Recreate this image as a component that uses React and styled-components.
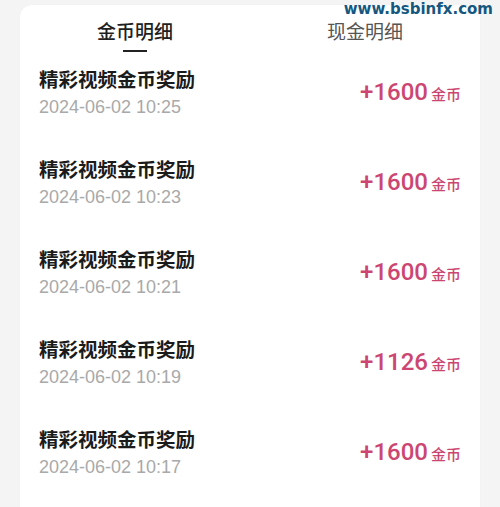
import React from "react";
import styled, { createGlobalStyle } from "styled-components";

const Global = createGlobalStyle`
  html, body { margin: 0; padding: 0; background: #f4f4f4; }
  body { font-family: "Liberation Sans", "Noto Sans CJK SC", sans-serif; }
  * { box-sizing: border-box; }
`;

const Page = styled.div`
  position: relative;
  width: 500px;
  height: 507px;
  overflow: hidden;
  background: #f4f4f4;
  padding: 5px 20px 0 20px;
`;

const Card = styled.div`
  background: #ffffff;
  border-radius: 12px 12px 0 0;
  height: 520px;
  padding: 0 19px;
  box-shadow: 0 0 2px rgba(0, 0, 0, 0.03);
`;

const Tabs = styled.div`
  display: grid;
  grid-template-columns: 1fr 1fr;
  margin: 0 -19px;
  height: 48px;
  padding-top: 14px;
`;

const Tab = styled.div`
  display: flex;
  flex-direction: column;
  align-items: center;
  font-family: "Noto Sans CJK SC", sans-serif;
  font-size: 19px;
  line-height: 24px;
  color: ${(p) => (p.$active ? "#1f1f1f" : "#555555")};
  font-weight: ${(p) => (p.$active ? 500 : 400)};
`;

const Underline = styled.div`
  width: 24px;
  height: 2px;
  margin-top: 7px;
  background: #222222;
`;

const Row = styled.div`
  display: flex;
  align-items: center;
  justify-content: space-between;
  padding: 13px 0 25px;
`;

const Info = styled.div`
  display: flex;
  flex-direction: column;
  gap: 4px;
`;

const Title = styled.div`
  font-family: "Noto Sans CJK SC", sans-serif;
  font-size: 19.5px;
  line-height: 26px;
  font-weight: 600;
  color: #1b1b1b;
`;

const Time = styled.div`
  font-family: "Liberation Sans", Arial, sans-serif;
  font-size: 18px;
  line-height: 22px;
  color: #a9a9a9;
`;

const Amount = styled.div`
  display: flex;
  align-items: baseline;
  gap: 3px;
  color: #cd4672;
`;

const Number = styled.span`
  font-family: Roboto, "Liberation Sans", sans-serif;
  font-size: 24px;
  font-weight: 500;
`;

const Unit = styled.span`
  font-family: "Noto Sans CJK SC", sans-serif;
  font-size: 15px;
  font-weight: 500;
`;

const Watermark = styled.div`
  position: absolute;
  top: 0;
  right: 7px;
  padding-top: 1px;
  font-family: "DejaVu Sans", sans-serif;
  font-weight: 700;
  font-size: 15px;
  line-height: 17px;
  color: #15577f;
`;

const records = [
  { time: "2024-06-02 10:25", amount: "+1600" },
  { time: "2024-06-02 10:23", amount: "+1600" },
  { time: "2024-06-02 10:21", amount: "+1600" },
  { time: "2024-06-02 10:19", amount: "+1126" },
  { time: "2024-06-02 10:17", amount: "+1600" },
];

export default function App() {
  return (
    <Page>
      <Global />
      <Card>
        <Tabs>
          <Tab $active>
            金币明细
            <Underline />
          </Tab>
          <Tab>现金明细</Tab>
        </Tabs>
        {records.map((r, i) => (
          <Row key={i}>
            <Info>
              <Title>精彩视频金币奖励</Title>
              <Time>{r.time}</Time>
            </Info>
            <Amount>
              <Number>{r.amount}</Number>
              <Unit>金币</Unit>
            </Amount>
          </Row>
        ))}
      </Card>
      <Watermark>www.bsbinfx.com</Watermark>
    </Page>
  );
}
